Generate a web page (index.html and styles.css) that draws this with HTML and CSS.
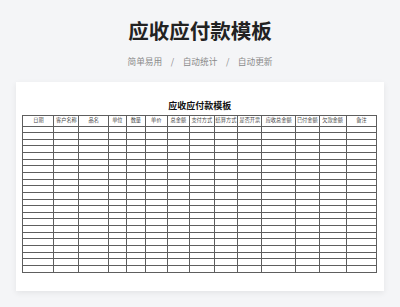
FILE: index.html
```html
<!DOCTYPE html>
<html lang="zh">
<head>
<meta charset="utf-8">
<title>应收应付款模板</title>
<link rel="stylesheet" href="styles.css">
</head>
<body>
<main class="page">
  <h1 class="title">应收应付款模板</h1>
  <p class="tags">
    <span>简单易用</span><span class="sep">/</span><span>自动统计</span><span class="sep">/</span><span>自动更新</span>
  </p>
  <section class="card">
    <h2 class="sheet-title">应收应付款模板</h2>
    <table class="sheet">
      <colgroup>
        <col class="w31"><col class="w25"><col class="w296"><col class="w177"><col class="w193"><col class="w217"><col class="w223"><col class="w247"><col class="w237"><col class="w24"><col class="w336"><col class="w237"><col class="w27"><col class="w307">
      </colgroup>
      <thead>
        <tr>
          <th>日期</th><th>客户名称</th><th>品名</th><th>单位</th><th>数量</th><th>单价</th><th>总金额</th><th>支付方式</th><th>结算方式</th><th>是否开票</th><th>应收总金额</th><th>已付金额</th><th>欠款金额</th><th>备注</th>
        </tr>
      </thead>
      <tbody>
        <tr><td></td><td></td><td></td><td></td><td></td><td></td><td></td><td></td><td></td><td></td><td></td><td></td><td></td><td></td></tr>
        <tr><td></td><td></td><td></td><td></td><td></td><td></td><td></td><td></td><td></td><td></td><td></td><td></td><td></td><td></td></tr>
        <tr><td></td><td></td><td></td><td></td><td></td><td></td><td></td><td></td><td></td><td></td><td></td><td></td><td></td><td></td></tr>
        <tr><td></td><td></td><td></td><td></td><td></td><td></td><td></td><td></td><td></td><td></td><td></td><td></td><td></td><td></td></tr>
        <tr><td></td><td></td><td></td><td></td><td></td><td></td><td></td><td></td><td></td><td></td><td></td><td></td><td></td><td></td></tr>
        <tr><td></td><td></td><td></td><td></td><td></td><td></td><td></td><td></td><td></td><td></td><td></td><td></td><td></td><td></td></tr>
        <tr><td></td><td></td><td></td><td></td><td></td><td></td><td></td><td></td><td></td><td></td><td></td><td></td><td></td><td></td></tr>
        <tr><td></td><td></td><td></td><td></td><td></td><td></td><td></td><td></td><td></td><td></td><td></td><td></td><td></td><td></td></tr>
        <tr><td></td><td></td><td></td><td></td><td></td><td></td><td></td><td></td><td></td><td></td><td></td><td></td><td></td><td></td></tr>
        <tr><td></td><td></td><td></td><td></td><td></td><td></td><td></td><td></td><td></td><td></td><td></td><td></td><td></td><td></td></tr>
        <tr><td></td><td></td><td></td><td></td><td></td><td></td><td></td><td></td><td></td><td></td><td></td><td></td><td></td><td></td></tr>
        <tr><td></td><td></td><td></td><td></td><td></td><td></td><td></td><td></td><td></td><td></td><td></td><td></td><td></td><td></td></tr>
        <tr><td></td><td></td><td></td><td></td><td></td><td></td><td></td><td></td><td></td><td></td><td></td><td></td><td></td><td></td></tr>
        <tr><td></td><td></td><td></td><td></td><td></td><td></td><td></td><td></td><td></td><td></td><td></td><td></td><td></td><td></td></tr>
        <tr><td></td><td></td><td></td><td></td><td></td><td></td><td></td><td></td><td></td><td></td><td></td><td></td><td></td><td></td></tr>
        <tr><td></td><td></td><td></td><td></td><td></td><td></td><td></td><td></td><td></td><td></td><td></td><td></td><td></td><td></td></tr>
        <tr><td></td><td></td><td></td><td></td><td></td><td></td><td></td><td></td><td></td><td></td><td></td><td></td><td></td><td></td></tr>
        <tr><td></td><td></td><td></td><td></td><td></td><td></td><td></td><td></td><td></td><td></td><td></td><td></td><td></td><td></td></tr>
        <tr><td></td><td></td><td></td><td></td><td></td><td></td><td></td><td></td><td></td><td></td><td></td><td></td><td></td><td></td></tr>
        <tr><td></td><td></td><td></td><td></td><td></td><td></td><td></td><td></td><td></td><td></td><td></td><td></td><td></td><td></td></tr>
        <tr><td></td><td></td><td></td><td></td><td></td><td></td><td></td><td></td><td></td><td></td><td></td><td></td><td></td><td></td></tr>
        <tr><td></td><td></td><td></td><td></td><td></td><td></td><td></td><td></td><td></td><td></td><td></td><td></td><td></td><td></td></tr>
      </tbody>
    </table>
  </section>
</main>
</body>
</html>
```

FILE: styles.css
```css
html, body {
  margin: 0;
  padding: 0;
  background: #f4f5f7;
}
body {
  font-family: "Noto Sans CJK SC", "Noto Sans", sans-serif;
  color: #222;
}
.page {
  width: 400px;
  height: 307px;
  display: flex;
  flex-direction: column;
  align-items: center;
  box-sizing: border-box;
  padding-top: 16px;
  overflow: hidden;
}
.title {
  margin: 0;
  font-size: 20.5px;
  line-height: 28px;
  font-weight: 700;
  color: #222;
}
.tags {
  margin: 12px 0 0;
  font-size: 8.7px;
  line-height: 12px;
  color: #8a8a8a;
  display: flex;
}
.sep {
  padding: 0 8.5px;
}
.card {
  margin-top: 14px;
  width: 368px;
  height: 209px;
  background: #fff;
  box-sizing: border-box;
  padding: 18px 7px 0 6.7px;
  box-shadow: 0 2px 6px rgba(0, 0, 0, 0.07);
  display: flex;
  flex-direction: column;
  align-items: center;
}
.sheet-title {
  margin: 0;
  font-family: "Liberation Serif", "Noto Sans CJK SC", serif;
  font-size: 9px;
  line-height: 12px;
  font-weight: 700;
  color: #111;
}
.sheet {
  margin-top: 3px;
  width: 354px;
  table-layout: fixed;
  border-collapse: collapse;
  font-family: "Liberation Serif", "Noto Sans CJK SC", serif;
}
.sheet th, .sheet td {
  border: 1px solid #5e5e5e;
  padding: 0;
  overflow: hidden;
  white-space: nowrap;
}
.sheet th {
  height: 9.5px;
  font-size: 5.2px;
  line-height: 9px;
  font-weight: 400;
  color: #444;
  text-align: center;
}
.sheet td {
  height: 5.65px;
  line-height: 0;
  font-size: 0;
}
.w31 { width: 31px; }
.w25 { width: 25px; }
.w296 { width: 29.6px; }
.w177 { width: 17.7px; }
.w193 { width: 19.3px; }
.w217 { width: 21.7px; }
.w223 { width: 22.3px; }
.w247 { width: 24.7px; }
.w237 { width: 23.7px; }
.w24 { width: 24px; }
.w336 { width: 33.6px; }
.w27 { width: 27px; }
.w307 { width: 30.7px; }
```
